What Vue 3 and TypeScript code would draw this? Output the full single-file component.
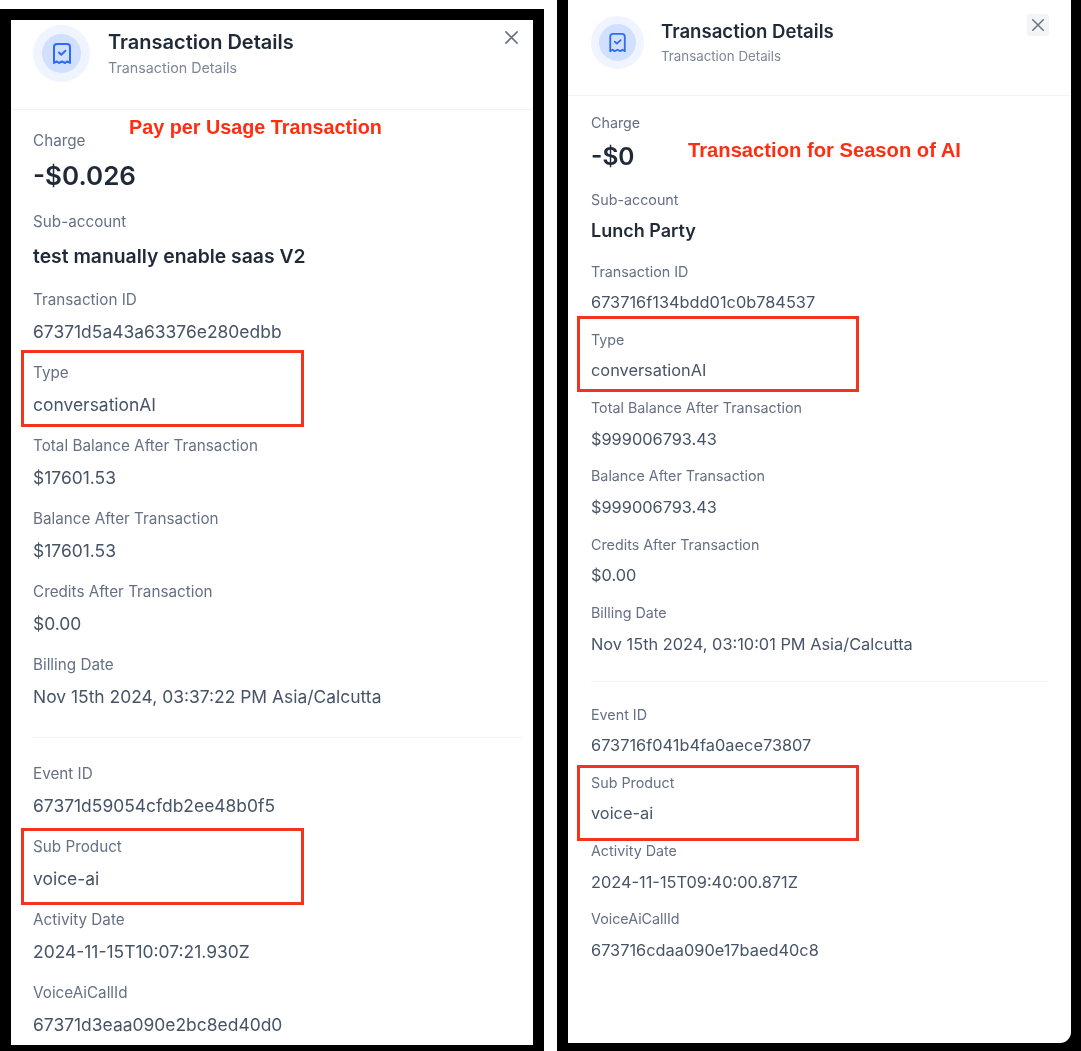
<script setup lang="ts">
interface Field {
  label: string;
  value: string;
  kind?: "big" | "strong";
}

interface Panel {
  name: string;
  main: Field[];
  extra: Field[];
}

const panels: Panel[] = [
  {
    name: "left",
    main: [
      { label: "Charge", value: "-$0.026", kind: "big" },
      { label: "Sub-account", value: "test manually enable saas V2", kind: "strong" },
      { label: "Transaction ID", value: "67371d5a43a63376e280edbb" },
      { label: "Type", value: "conversationAI" },
      { label: "Total Balance After Transaction", value: "$17601.53" },
      { label: "Balance After Transaction", value: "$17601.53" },
      { label: "Credits After Transaction", value: "$0.00" },
      { label: "Billing Date", value: "Nov 15th 2024, 03:37:22 PM Asia/Calcutta" },
    ],
    extra: [
      { label: "Event ID", value: "67371d59054cfdb2ee48b0f5" },
      { label: "Sub Product", value: "voice-ai" },
      { label: "Activity Date", value: "2024-11-15T10:07:21.930Z" },
      { label: "VoiceAiCallId", value: "67371d3eaa090e2bc8ed40d0" },
    ],
  },
  {
    name: "right",
    main: [
      { label: "Charge", value: "-$0", kind: "big" },
      { label: "Sub-account", value: "Lunch Party", kind: "strong" },
      { label: "Transaction ID", value: "673716f134bdd01c0b784537" },
      { label: "Type", value: "conversationAI" },
      { label: "Total Balance After Transaction", value: "$999006793.43" },
      { label: "Balance After Transaction", value: "$999006793.43" },
      { label: "Credits After Transaction", value: "$0.00" },
      { label: "Billing Date", value: "Nov 15th 2024, 03:10:01 PM Asia/Calcutta" },
    ],
    extra: [
      { label: "Event ID", value: "673716f041b4fa0aece73807" },
      { label: "Sub Product", value: "voice-ai" },
      { label: "Activity Date", value: "2024-11-15T09:40:00.871Z" },
      { label: "VoiceAiCallId", value: "673716cdaa090e17baed40c8" },
    ],
  },
];
</script>

<template>
  <main class="page">
    <section v-for="panel in panels" :key="panel.name" class="frame" :class="panel.name">
      <div class="sheet">
        <header class="head">
          <div class="halo">
            <div class="disc">
              <svg class="receipt" viewBox="0 0 18 22" fill="none" stroke="#2f6df0" stroke-width="2" stroke-linejoin="round" stroke-linecap="round">
                <path d="M1 20V4a3 3 0 0 1 3-3h10a3 3 0 0 1 3 3v16l-2.7-1.6L12 20l-3-1.6L6 20l-2.300-1.6L1 20Z" />
                <path d="M6 9.500l2.200 2.200L12.500 7.800" />
              </svg>
            </div>
          </div>
          <div class="titles">
            <div class="title">Transaction Details</div>
            <div class="subtitle">Transaction Details</div>
          </div>
          <button class="close" type="button" aria-label="Close">
            <svg viewBox="0 0 16 16" fill="none" stroke="#6b7280" stroke-width="1.700" stroke-linecap="round">
              <path d="M2 2l12 12M14 2L2 14" />
            </svg>
          </button>
        </header>
        <div class="body">
          <div v-for="field in panel.main" :key="field.label" class="field" :class="field.kind">
            <div class="label">{{ field.label }}</div>
            <div class="value">{{ field.value }}</div>
          </div>
          <hr class="rule">
          <div v-for="field in panel.extra" :key="field.label" class="field">
            <div class="label">{{ field.label }}</div>
            <div class="value">{{ field.value }}</div>
          </div>
        </div>
      </div>
    </section>

    <!-- annotations drawn over the two screenshots -->
    <div class="note note-left">Pay per Usage Transaction</div>
    <div class="note note-right">Transaction for Season of AI</div>
    <div class="mark mark-a"></div>
    <div class="mark mark-b"></div>
    <div class="mark mark-c"></div>
    <div class="mark mark-d"></div>
  </main>
</template>

<style>
html,
body {
  background: #fff;
}
</style>

<style scoped>
.page {
  position: relative;
  display: flex;
  gap: 13px;
  width: 1081px;
  height: 1051px;
  overflow: hidden;
  background: #fff;
  font-family: Inter, "Liberation Sans", sans-serif;
}

.frame {
  box-sizing: border-box;
  display: flex;
  flex-direction: column;
  background: #000;
}

.frame.left {
  width: 544px;
  margin-top: 9px;
  padding: 11px 11px 6px 11px;
  --head: 90px;
  --halo: 57px;
  --disc: 39px;
  --title-size: 20px;
  --sub-size: 14.300px;
  --label-size: 15.250px;
  --value-size: 17.450px;
  --big-size: 26px;
  --strong-size: 19.350px;
  --pad-l: 22px;
  --pad-r: 11px;
  --label-lh: 22px;
  --value-lh: 22px;
  --big-lh: 30px;
  --strong-lh: 28px;
  --value-gap: 10px;
  --row-gap: 19px;
}

.frame.right {
  width: 524px;
  padding: 0 10px 8px 11px;
  --head: 96px;
  --halo: 53px;
  --disc: 37px;
  --title-size: 18.600px;
  --sub-size: 13.300px;
  --label-size: 14.300px;
  --value-size: 16.350px;
  --big-size: 24.500px;
  --strong-size: 18px;
  --pad-l: 23px;
  --pad-r: 23px;
  --label-lh: 20px;
  --value-lh: 20px;
  --big-lh: 26px;
  --strong-lh: 24px;
  --value-gap: 10.600px;
  --row-gap: 17.700px;
}

.sheet {
  flex: 1;
  min-height: 0;
  overflow: hidden;
  background: #fff;
  filter: blur(0.45px);
}

.frame.right .sheet {
  border-bottom-right-radius: 11px;
}

.head {
  box-sizing: border-box;
  display: flex;
  height: var(--head);
  padding-left: var(--pad-l);
  border-bottom: 1px solid #f2f4f7;
}

.left .head {
  padding-top: 5px;
}

.right .head {
  padding-top: 16px;
}

.halo {
  display: flex;
  align-items: center;
  justify-content: center;
  width: var(--halo);
  height: var(--halo);
  border-radius: 50%;
  background: #eff4ff;
}

.disc {
  display: flex;
  align-items: center;
  justify-content: center;
  width: var(--disc);
  height: var(--disc);
  border-radius: 50%;
  background: #d1e0ff;
}

.receipt {
  width: 18px;
  height: 22px;
}

.right .receipt {
  width: 17px;
  height: 20px;
}

.titles {
  flex: 1;
  margin-left: 18px;
}

.right .titles {
  margin-left: 17px;
}

.title {
  color: #1f2937;
  font-size: var(--title-size);
  font-weight: 600;
  line-height: 26px;
  white-space: nowrap;
}

.subtitle {
  color: #7d8796;
  font-size: var(--sub-size);
  line-height: 26px;
  white-space: nowrap;
}

.left .titles {
  padding-top: 4px;
}

.right .titles {
  padding-top: 2px;
}

.right .subtitle {
  margin-top: -1px;
}

.close {
  display: flex;
  align-items: center;
  justify-content: center;
  padding: 0;
  border: none;
  border-radius: 3px;
  background: transparent;
}

.left .close {
  width: 18px;
  height: 18px;
  margin: 3px 13px 0 0;
}

.left .close svg {
  width: 15px;
  height: 15px;
}

.right .close {
  width: 22px;
  height: 22px;
  margin: -2px 22px 0 0;
  background: #f2f4f7;
}

.right .close svg {
  width: 14px;
  height: 14px;
}

.body {
  padding: 19.500px var(--pad-r) 0 var(--pad-l);
}

.right .body {
  padding-top: 17px;
}

.field {
  margin-bottom: var(--row-gap);
}

.label {
  color: #667085;
  font-size: var(--label-size);
  line-height: var(--label-lh);
  white-space: nowrap;
}

.value {
  margin-top: var(--value-gap);
  color: #475467;
  font-size: var(--value-size);
  line-height: var(--value-lh);
  white-space: nowrap;
}

.big .value {
  margin-top: 9.500px;
  color: #1f2937;
  font-size: var(--big-size);
  font-weight: 600;
  line-height: var(--big-lh);
}

.strong .value {
  margin-top: 9.500px;
  color: #1f2937;
  font-size: var(--strong-size);
  font-weight: 600;
  line-height: var(--strong-lh);
}

.left .big {
  margin-bottom: 19.500px;
}

.left .strong {
  margin-bottom: 18.500px;
}

.right .big {
  margin-bottom: 21px;
}

.right .strong {
  margin-bottom: 18.500px;
}

.rule {
  height: 1px;
  border: none;
  background: #f2f4f7;
}

.left .rule {
  margin: 29.500px 0 25px;
}

.right .rule {
  margin: 27px 0 23px;
}

.note {
  position: absolute;
  color: #ff2d12;
  font-family: "Liberation Sans", Arial, sans-serif;
  font-weight: 700;
  line-height: 22px;
  white-space: nowrap;
  filter: blur(0.3px);
}

.note-left {
  left: 129px;
  top: 116px;
  font-size: 19.800px;
}

.note-right {
  left: 688px;
  top: 139px;
  font-size: 20.200px;
}

.mark {
  position: absolute;
  box-sizing: border-box;
  border: 3px solid #f0341f;
}

.mark-a {
  left: 21px;
  top: 350px;
  width: 283px;
  height: 77px;
}

.mark-b {
  left: 21px;
  top: 828px;
  width: 283px;
  height: 77px;
}

.mark-c {
  left: 577px;
  top: 316px;
  width: 282px;
  height: 76px;
}

.mark-d {
  left: 577px;
  top: 765px;
  width: 282px;
  height: 76px;
}
</style>
